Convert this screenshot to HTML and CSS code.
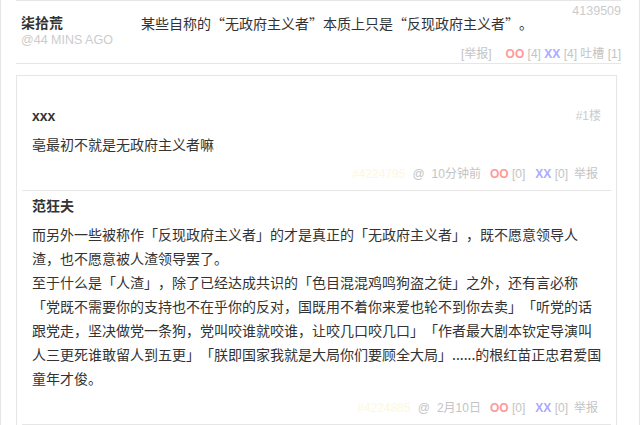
FILE: index.html
```html
<!DOCTYPE html>
<html lang="zh-CN">
<head>
    <meta charset="UTF-8">
    <title>吐槽</title>
    <link rel="stylesheet" href="styles.css">
</head>
<body>
    <div class="wrap">
        <div class="post">
            <div class="post-id">4139509</div>
            <div class="post-main">
                <div class="author">
                    <b>柒拾荒</b>
                    <small>@44 MINS AGO</small>
                </div>
                <div class="post-body">
                    <div class="post-text">某些自称的“无政府主义者”本质上只是“反现政府主义者”。</div>
                    <div class="foot">[举报]<span class="oo gap-l">OO</span> [4] <span class="xx">XX</span> [4] 吐槽 [1]</div>
                </div>
            </div>
        </div>

        <div class="comments">
            <div class="comment">
                <div class="cname">xxx<span class="floor">#1楼</span></div>
                <div class="ctext">亳最初不就是无政府主义者嘛</div>
                <div class="foot"><span class="cid">#4224795</span><span class="at">@</span>10分钟前<span class="oo gap-o">OO</span> [0]<span class="xx gap-x">XX</span> [0]<span class="report">举报</span></div>
            </div>
            <div class="comment">
                <div class="cname">范狂夫</div>
                <div class="ctext">而另外一些被称作「反现政府主义者」的才是真正的「无政府主义者」，既不愿意领导人<br>渣，也不愿意被人渣领导罢了。<br>至于什么是「人渣」，除了已经达成共识的「色目混混鸡鸣狗盗之徒」之外，还有言必称<br>「党既不需要你的支持也不在乎你的反对，国既用不着你来爱也轮不到你去卖」「听党的话<br>跟党走，坚决做党一条狗，党叫咬谁就咬谁，让咬几口咬几口」「作者最大剧本钦定导演叫<br>人三更死谁敢留人到五更」「朕即国家我就是大局你们要顾全大局」......的根红苗正忠君爱国<br>童年才俊。</div>
                <div class="foot"><span class="cid">#4224885</span><span class="at">@</span>2月10日<span class="oo gap-o">OO</span> [0]<span class="xx gap-x">XX</span> [0]<span class="report">举报</span></div>
            </div>
        </div>
    </div>
</body>
</html>
```

FILE: styles.css
```css
body {
    margin: 0;
    background: #fff;
    font-family: "Liberation Sans", "Noto Sans CJK SC", sans-serif;
    color: #333;
}
.wrap {
    width: 640px;
    min-height: 425px;
    box-sizing: border-box;
    border-left: 1px solid #e6e6e6;
    border-right: 1px solid #e6e6e6;
    overflow: hidden;
}
.post {
    position: relative;
    width: 605px;
    margin-left: 15px;
    border-top: 1px solid #e6e6e6;
    border-bottom: 1px solid #e6e6e6;
}
.post-id {
    position: absolute;
    top: 2px;
    right: 0;
    font-size: 12.5px;
    line-height: 16px;
    color: #ccc;
}
.post-main {
    display: grid;
    grid-template-columns: 125px 1fr;
    padding-top: 12px;
}
.author {
    padding-left: 5px;
}
.author b {
    display: block;
    font-size: 14px;
    line-height: 20px;
}
.author small {
    display: block;
    font-size: 12.5px;
    line-height: 15px;
    color: #ccc;
}
.post-text {
    font-family: "Noto Sans CJK SC", sans-serif;
    font-size: 14px;
    line-height: 20px;
    text-spacing-trim: space-all;
}
.post-body .foot {
    margin-top: 12px;
    line-height: 18px;
}
.foot {
    text-align: right;
    font-size: 12px;
    color: #c4c4c4;
    white-space: nowrap;
}
.oo {
    color: #f99;
    font-weight: bold;
}
.xx {
    color: #aaf;
    font-weight: bold;
}
.gap-l {
    margin-left: 14px;
}
.comments {
    width: 601px;
    box-sizing: border-box;
    margin: 11px 0 0 15px;
    padding-top: 25px;
    border: 1px solid #e6e6e6;
    border-bottom: none;
    min-height: 400px;
}
.comment {
    margin: 0 5px;
    padding: 5px 13px 6px 10px;
    border-bottom: 1px solid #e6e6e6;
}
.cname {
    font-size: 14px;
    font-weight: bold;
    line-height: 20px;
}
.floor {
    float: right;
    margin-right: -3px;
    font-size: 12px;
    font-weight: normal;
    color: #ccc;
}
.ctext {
    margin-top: 6px;
    font-family: "Noto Sans CJK SC", sans-serif;
    font-size: 14px;
    line-height: 24px;
    white-space: nowrap;
    text-spacing-trim: space-all;
}
.comment .foot {
    margin-top: 8px;
    line-height: 20px;
}
.cid {
    color: #fdf8dc;
}
.at {
    margin: 0 7px;
}
.gap-o {
    margin-left: 9px;
}
.gap-x {
    margin-left: 10px;
}
.report {
    margin-left: 6px;
}
```
